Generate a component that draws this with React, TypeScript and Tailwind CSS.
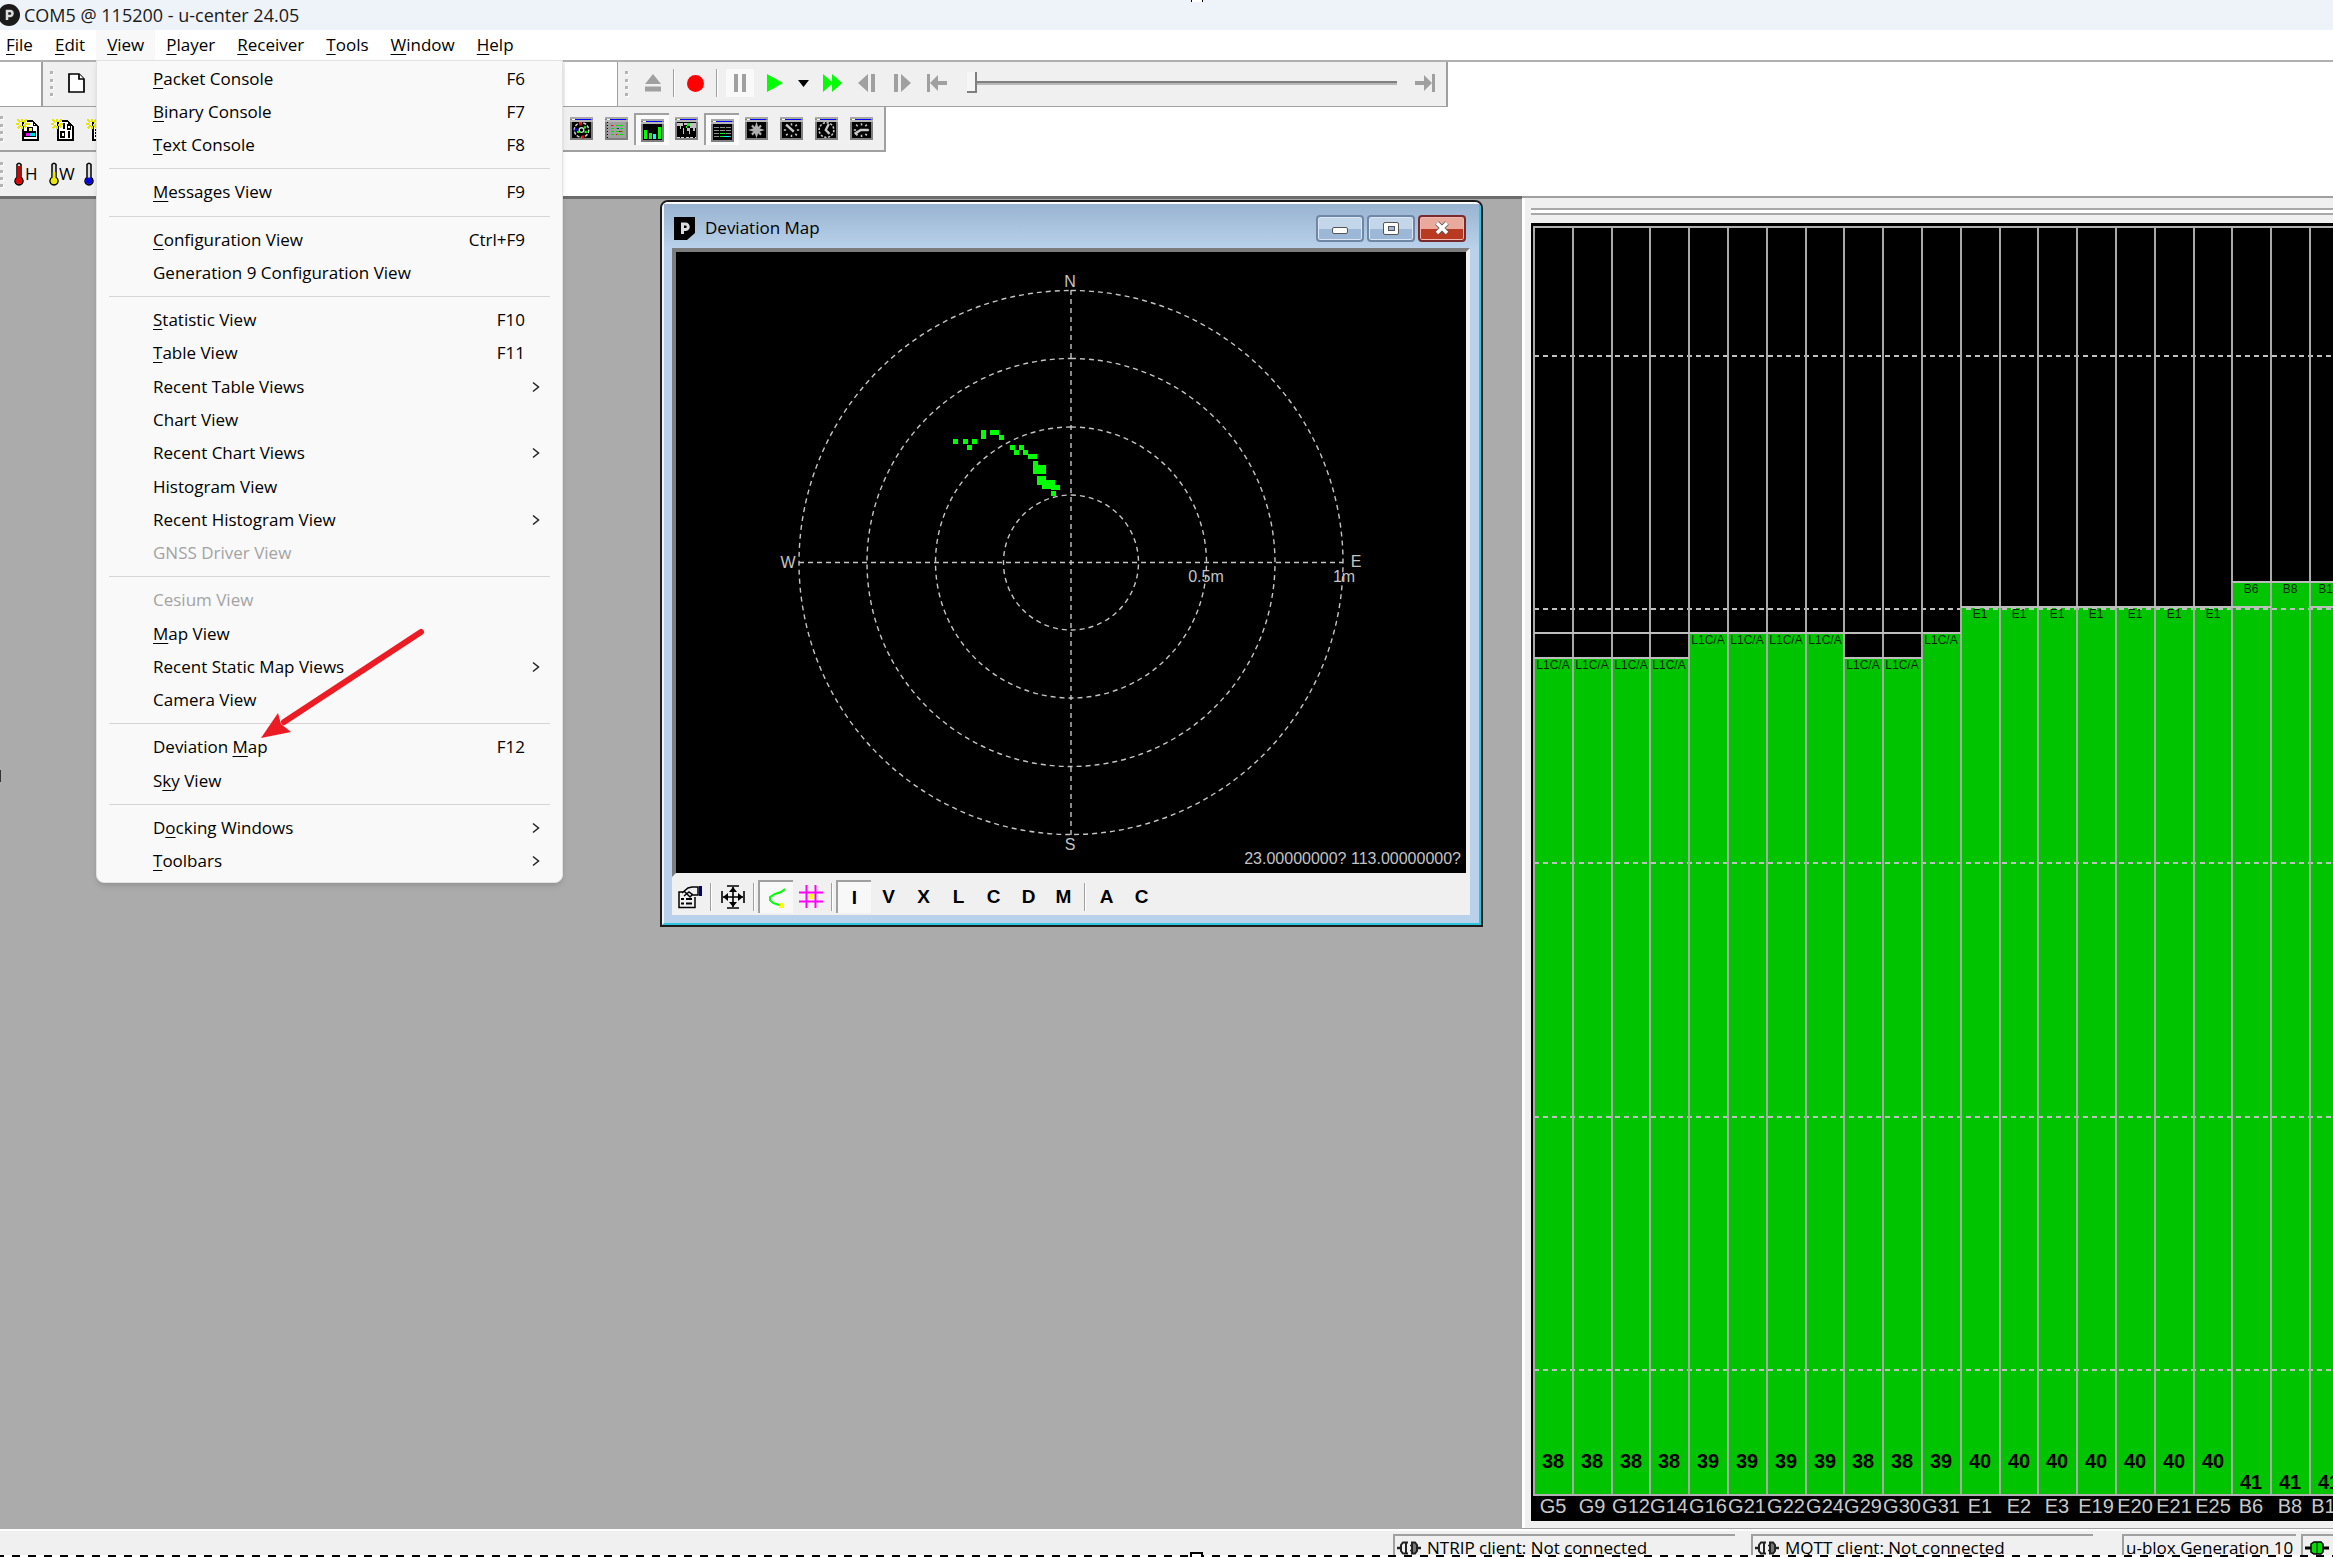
import React from "react";

type Item = {
  pre?: string;
  key?: string;
  post?: string;
  accel?: string;
  sub?: boolean;
  off?: boolean;
};

const menus = ["File", "Edit", "View", "Player", "Receiver", "Tools", "Window", "Help"];

const groups: Item[][] = [
  [
    { key: "P", post: "acket Console", accel: "F6" },
    { key: "B", post: "inary Console", accel: "F7" },
    { key: "T", post: "ext Console", accel: "F8" },
  ],
  [{ key: "M", post: "essages View", accel: "F9" }],
  [
    { key: "C", post: "onfiguration View", accel: "Ctrl+F9" },
    { pre: "Generation 9 Configuration View" },
  ],
  [
    { key: "S", post: "tatistic View", accel: "F10" },
    { key: "T", post: "able View", accel: "F11" },
    { pre: "Recent Table Views", sub: true },
    { pre: "Chart View" },
    { pre: "Recent Chart Views", sub: true },
    { pre: "Histogram View" },
    { pre: "Recent Histogram View", sub: true },
    { pre: "GNSS Driver View", off: true },
  ],
  [
    { pre: "Cesium View", off: true },
    { key: "M", post: "ap View" },
    { pre: "Recent Static Map Views", sub: true },
    { pre: "Camera View" },
  ],
  [
    { pre: "Deviation ", key: "M", post: "ap", accel: "F12" },
    { pre: "S", key: "k", post: "y View" },
  ],
  [
    { pre: "D", key: "o", post: "cking Windows", sub: true },
    { key: "T", post: "oolbars", sub: true },
  ],
];

function Mnemonic({ pre, k, post }: { pre?: string; k?: string; post?: string }) {
  return (
    <span className="whitespace-pre">
      {pre}
      {k && <span className="underline decoration-1 underline-offset-3">{k}</span>}
      {post}
    </span>
  );
}

function ViewMenu() {
  return (
    <div
      role="menu"
      aria-label="View"
      className="absolute left-24 top-[60px] z-20 flex h-[823px] w-[467px] flex-col rounded-b-lg border border-[#e2e2e2] bg-[#f9f9f9] pt-px pb-1 shadow-md"
    >
      {groups.map((group, g) => (
        <React.Fragment key={g}>
          {g > 0 && (
            <div role="separator" className="mx-3 flex h-[14px] items-center">
              <div className="h-px w-full bg-[#d6d6d6]" />
            </div>
          )}
          {group.map((it, i) => (
            <button
              key={i}
              role="menuitem"
              disabled={it.off}
              className="flex min-h-0 flex-1 items-center pr-[19px] pl-14 text-left text-black disabled:text-[#a3a3a3]"
            >
              <Mnemonic pre={it.pre} k={it.key} post={it.post} />
              <span className="ml-auto pr-[18px]">{it.accel}</span>
              {it.sub && (
                <svg className="h-3 w-[14px]" viewBox="0 0 14 12" fill="none" stroke="#222" strokeWidth="1.5">
                  <path d="M4 1.5L9.5 6L4 10.5" />
                </svg>
              )}
            </button>
          ))}
        </React.Fragment>
      ))}
    </div>
  );
}

function Arrow() {
  return (
    <svg className="pointer-events-none absolute left-[256px] top-[620px] z-30 h-[125px] w-[175px]" viewBox="256 620 175 125">
      <path d="M421 632L284 722" stroke="#ed1c24" strokeWidth="6" strokeLinecap="round" />
      <path d="M261 738L278 713L281 724L291 732Z" fill="#ed1c24" />
    </svg>
  );
}

function Grip() {
  return (
    <svg className="h-[27px] w-1 shrink-0" viewBox="0 0 4 27">
      {[1, 9, 16, 23].map((y) => (
        <g key={y}>
          <rect x="1" y={y + 1} width="3" height="3" fill="#fff" />
          <rect x="0" y={y} width="3" height="3" fill="#b4b4b4" />
        </g>
      ))}
    </svg>
  );
}

function Divider() {
  return <div className="h-7 w-[2px] border-l border-[#a0a0a0] bg-white" />;
}

function Mini({ children }: { children: React.ReactNode }) {
  return (
    <svg className="h-[23px] w-[23px]" viewBox="0 0 15 15" shapeRendering="crispEdges">
      <rect width="15" height="15" fill="#808080" />
      <rect x="0" y="0" width="15" height="1" fill="#a8a8a8" />
      <rect x="1" y="1" width="13" height="1" fill="#0000ff" />
      <rect x="1" y="1" width="2" height="1" fill="#fff" />
      <rect x="0" y="2" width="15" height="1" fill="#b8b8b8" />
      <rect x="1" y="3" width="13" height="11" fill="#000" />
      {children}
    </svg>
  );
}

const rays = "M7.5 4V5.5M7.5 11.5V13M2.5 8.5H4M11 8.5H12.5M4 5L5 6M11 5L10 6M4 12L5 11M11 12L10 11";

const views: { name: string; on?: boolean; art: React.ReactNode }[] = [
  {
    name: "Sky view",
    art: (
      <g shapeRendering="auto">
        <circle cx="7.5" cy="8.5" r="4.7" fill="none" stroke="#d0d0d0" strokeWidth="1" strokeDasharray="2 .9" />
        <circle cx="7.5" cy="8.5" r="1.5" fill="none" stroke="#d0d0d0" strokeWidth=".9" />
        <path d="M6 3.5h1.700v2H6zM7.500 12h1.700v2h-1.700z" fill="#f00" />
        <path d="M9 6h1.500v1.500H9zM4.500 9H6v1.500H4.500zM9.500 9H11v1.500H9.500z" fill="#0f0" />
        <path d="M3 7.500h1.700v1.500H3z" fill="#00f" />
      </g>
    ),
  },
  {
    name: "Deviation map",
    art: (
      <g>
        <rect x="1" y="3" width="13" height="11" fill="#a0a0a0" />
        <path d="M1.5 3v11" stroke="#000" strokeWidth="1" strokeDasharray="1 1" />
        <path d="M4 5.5h8M4 7.5h8M4 9.5h8M4 11.5h8" stroke="#00e000" strokeWidth="1" strokeDasharray="2 1" />
        <path d="M4 5h1v1H4zM10 9h1v1h-1zM7 11h1v1H7z" fill="#f00" />
        <path d="M8 7h1v1H8zM9 9h1v1H9z" fill="#00f" />
      </g>
    ),
  },
  {
    name: "Satellite level",
    on: true,
    art: (
      <g>
        <path d="M2 7h2v6H2zM5 9h2v4H5zM11 5h2v8h-2z" fill="#0f0" />
        <path d="M8 10h2v3H8z" fill="#00ffff" />
      </g>
    ),
  },
  {
    name: "World position",
    art: (
      <g>
        <path d="M1 4h4v2H4v2H3V6H1zM5 7h1v4H5zM6 4h2v1H6zM10 4h4v3h-1v2h-1V7h-2zM8 7h2v4H9V9H8z" fill="#c0c0c0" />
        <path d="M8 4h2v2H8zM7 6h1v1H7z" fill="#0f0" />
        <path d="M1 13.5h13" stroke="#d8d8d8" strokeWidth="1" strokeDasharray="2 1" />
      </g>
    ),
  },
  {
    name: "Data view",
    on: true,
    art: (
      <g>
        <path d="M2 5.5h11M2 7.5h11M2 9.5h11M2 11.5h11" stroke="#909090" strokeWidth="1" />
        <path d="M5.5 4v9M9.5 4v9" stroke="#000" strokeWidth=".6" />
        <path d="M6 9h3v1H6zM6 11h2v1H6z" fill="#0f0" />
        <path d="M8 11h4v1H8z" fill="#00ffff" />
      </g>
    ),
  },
  {
    name: "Compass",
    art: (
      <g shapeRendering="auto">
        <path d="M7.5 3L8.8 7.2L13 8.5L8.8 9.8L7.5 14L6.2 9.8L2 8.5L6.2 7.2Z" fill="#b0b0b0" />
        <path d="M4.500 5.500L10.500 11.500M10.500 5.500L4.500 11.500" stroke="#b0b0b0" strokeWidth="1.400" />
      </g>
    ),
  },
  {
    name: "Speedometer",
    art: (
      <g shapeRendering="auto" stroke="#c8c8c8" fill="none">
        <path d={rays} strokeWidth="1" />
        <path d="M4 5L9 9.5" strokeWidth="1.6" />
      </g>
    ),
  },
  {
    name: "Clock",
    art: (
      <g shapeRendering="auto" stroke="#c8c8c8" fill="none">
        <circle cx="7.5" cy="8.5" r="4.8" strokeWidth="1" strokeDasharray="1.5 1" />
        <path d="M9 4.5L7 8.5L9.5 11" strokeWidth="1.5" />
      </g>
    ),
  },
  {
    name: "Altimeter",
    art: (
      <g shapeRendering="auto" stroke="#c8c8c8" fill="none">
        <path d={rays} strokeWidth="1" />
        <path d="M3 11L7 8.5H12" strokeWidth="1.6" />
      </g>
    ),
  },
];

function NewPage({ children }: { children: React.ReactNode }) {
  return (
    <svg className="h-6 w-6" viewBox="0 0 16 16" shapeRendering="crispEdges">
      <path d="M4.5 3V15.5H14.5V6L11 2.5H7" fill="#fff" stroke="#000" strokeWidth="1.1" />
      <path d="M11.5 2.5V5.5H14.5" fill="none" stroke="#000" strokeWidth="1" />
      <path d="M4 1v2M0 4.5h2M6 4.5h3M4 6v2M1 1.5l2 2M7 1.5l-2 2M1 7.5l2-2M5 5l2 2" stroke="#e6e600" strokeWidth="1.2" />
      {children}
    </svg>
  );
}

function Thermo({ fill, level }: { fill: string; level: number }) {
  return (
    <svg className="h-[24px] w-[10px]" viewBox="0 0 10 24">
      <path d="M3 2.5Q5 0 7 2.5V15.5A4 4 0 1 1 3 15.5Z" fill="#ddd" stroke="#000" strokeWidth="1.5" />
      <rect x="3.8" y={level} width="2.6" height={19 - level} fill={fill} />
      <circle cx="5" cy="18.8" r="3.3" fill={fill} />
    </svg>
  );
}

const slot = "flex h-8 w-[35px] shrink-0 items-center justify-center";

function PlayerBar() {
  const g = "#a0a0a0";
  return (
    <div className="flex items-center border-r-2 border-[#a0a0a0] bg-[#f0f0f0] pr-1 pb-[2px]">
      <div className="flex w-[18px] justify-center">
        <Grip />
      </div>
      <button aria-label="Eject" className="flex w-[33px] justify-center">
        <svg className="h-[18px] w-[18px]" viewBox="0 0 18 18" fill={g}>
          <path d="M9 0L17 10H1ZM1 12.500h16v5H1z" />
        </svg>
      </button>
      <div className="flex w-[9px] justify-center">
        <Divider />
      </div>
      <button aria-label="Record" className={slot}>
        <span className="size-[17px] rounded-full bg-[#ff0000]" />
      </button>
      <div className="flex w-2 justify-center">
        <Divider />
      </div>
      <button aria-label="Pause" className="flex w-[37px] justify-center">
        <span className="flex h-7 w-7 items-center justify-center gap-1 bg-[#f9f9f9]">
          <span className="h-[18px] w-1 bg-[#a0a0a0]" />
          <span className="h-[18px] w-1 bg-[#a0a0a0]" />
        </span>
      </button>
      <button aria-label="Play" className="flex w-[33px] justify-center">
        <svg className="h-[18px] w-4" viewBox="0 0 16 18" fill="#00ff00">
          <path d="M0 0L16 9L0 18Z" />
        </svg>
      </button>
      <button aria-label="Play options" className="flex w-[25px] justify-center">
        <svg className="h-[7px] w-[11px]" viewBox="0 0 11 7">
          <path d="M0 0H11L5.5 7Z" />
        </svg>
      </button>
      <button aria-label="Fast forward" className="flex w-[33px] justify-center">
        <svg className="h-[18px] w-[19px]" viewBox="0 0 19 18" fill="#00ff00">
          <path d="M0 0L10 9L0 18ZM9 0L19 9L9 18Z" />
        </svg>
      </button>
      <button aria-label="Step back" className={slot}>
        <svg className="h-[18px] w-[18px]" viewBox="0 0 18 18" fill={g}>
          <path d="M10 0V18L0 9ZM13 0h4v18h-4z" />
        </svg>
      </button>
      <button aria-label="Step forward" className={slot}>
        <svg className="h-[18px] w-[18px]" viewBox="0 0 18 18" fill={g}>
          <path d="M8 0V18L18 9ZM1 0h4v18H1z" />
        </svg>
      </button>
      <button aria-label="Go to start" className={slot}>
        <svg className="h-[18px] w-5" viewBox="0 0 20 18" fill={g}>
          <path d="M0 0h3v18H0zM3 9L11 1V7H20V11H11V17Z" />
        </svg>
      </button>
      <input
        type="range"
        aria-label="Position"
        defaultValue={0}
        className="ml-[13px] h-6 w-[430px] appearance-none bg-transparent [&::-webkit-slider-runnable-track]:h-[4px] [&::-webkit-slider-runnable-track]:border-t-2 [&::-webkit-slider-runnable-track]:border-[#808080] [&::-webkit-slider-runnable-track]:bg-[#b8b8b8] [&::-webkit-slider-thumb]:-mt-[11px] [&::-webkit-slider-thumb]:h-[21px] [&::-webkit-slider-thumb]:w-[10px] [&::-webkit-slider-thumb]:appearance-none [&::-webkit-slider-thumb]:border-r-2 [&::-webkit-slider-thumb]:border-b-2 [&::-webkit-slider-thumb]:border-[#808080] [&::-webkit-slider-thumb]:bg-[#f6f6f6]"
      />
      <button aria-label="Go to end" className="ml-[10px] flex h-8 w-[35px] items-center justify-center">
        <svg className="h-[18px] w-5" viewBox="0 0 20 18" fill={g}>
          <path d="M17 0h3v18H17zM17 9L9 1V7H0V11H9V17Z" />
        </svg>
      </button>
    </div>
  );
}

function Toolbars() {
  return (
    <div className="flex flex-col bg-white">
      <div className="flex h-[47px] items-stretch border-t-2 border-[#b0b0b0]">
        <div className="w-[41px] border-b border-[#a0a0a0]" />
        <div className="flex w-[524px] items-center border-b border-l-2 border-[#a0a0a0] bg-[#f0f0f0] pb-[2px] pl-[7px]">
          <Grip />
          <button aria-label="New" className="ml-[14px]">
            <svg className="h-5 w-[17px]" viewBox="0 0 17 20" fill="#fff" stroke="#000" strokeWidth="1.7">
              <path d="M1 1H11L16 6V19H1Z" />
              <path d="M11 1V6H16" />
            </svg>
          </button>
        </div>
        <div className="flex border-b border-[#a0a0a0] pl-[52px]">
          <div className="flex border-l border-[#a0a0a0]">
            <PlayerBar />
          </div>
        </div>
      </div>
      <div className="flex h-[45px] w-[886px] items-center border-r-2 border-b-2 border-[#a0a0a0] bg-[#f0f0f0] pr-[5px]">
        <div className="flex w-[10px]">
          <Grip />
        </div>
        <button aria-label="New packet console" className={slot}>
          <NewPage>
            <path d="M8 7h3v3H8z" fill="#ffff00" stroke="#000" strokeWidth=".8" />
            <path d="M6 10h4v3H6z" fill="#ff00ff" />
            <path d="M9 10h4v3H9z" fill="#00dddd" />
            <path d="M6 10h7v3H6z" fill="none" stroke="#000" strokeWidth=".8" />
          </NewPage>
        </button>
        <button aria-label="New binary console" className={slot}>
          <NewPage>
            <path d="M8.500 4V8M11 5h2v3h-2zM6.500 10h2.500v3.500H6.500zM12 9.500V14" fill="none" stroke="#000" strokeWidth="1.2" />
          </NewPage>
        </button>
        <button aria-label="New text console" className={slot}>
          <NewPage>
            <path d="M6 8.500h7M6 10.500h7M6 12.500h7" stroke="#000" strokeWidth="1" />
          </NewPage>
        </button>
        <div className="ml-auto flex items-center">
          {views.map((v) => (
            <button
              key={v.name}
              aria-label={v.name}
              className={
                v.on
                  ? "flex h-8 w-[35px] items-center justify-center border-t-2 border-l-2 border-[#a0a0a0] bg-[#fafafa] pt-[2px]"
                  : "flex h-8 w-[35px] items-center justify-center"
              }
            >
              <Mini>{v.art}</Mini>
            </button>
          ))}
        </div>
      </div>
      <div className="flex h-[44px]">
        <div className="flex w-[400px] items-center bg-[#f0f0f0]">
          <div className="flex w-[14px]">
            <Grip />
          </div>
          <button aria-label="Hotstart" className="flex w-[35px] items-center gap-px text-[17px] leading-5">
            <Thermo fill="#e00000" level={4} />H
          </button>
          <button aria-label="Warmstart" className="flex w-[35px] items-center text-[17px] leading-5">
            <Thermo fill="#e8e800" level={10} />W
          </button>
          <button aria-label="Coldstart" className="flex w-[35px] items-center">
            <Thermo fill="#0000e0" level={16} />
          </button>
        </div>
      </div>
    </div>
  );
}

const trail: [number, number, number, number][] = [
  [953, 439, 5, 5], [963, 439, 5, 5], [972, 439, 5, 5], [967, 445, 5, 5], [981, 430, 5, 9],
  [990, 430, 9, 5], [999, 435, 5, 5], [1010, 445, 5, 5], [1019, 445, 5, 5], [1014, 450, 5, 5],
  [1023, 450, 5, 5], [1028, 454, 9, 5], [1033, 461, 5, 5], [1033, 465, 13, 9], [1037, 476, 9, 9],
  [1042, 480, 13, 9], [1051, 485, 9, 5], [1051, 491, 5, 5],
];

function Plot() {
  return (
    <svg className="block h-[621px] w-full" viewBox="676 252 790 621" preserveAspectRatio="xMidYMid slice">
      <rect x="676" y="252" width="790" height="621" fill="#000" />
      <g fill="none" stroke="#c4c4c4" strokeWidth="1.400" strokeDasharray="5 4">
        {[67.5, 135.5, 204, 272].map((r) => (
          <circle key={r} cx="1071" cy="562.500" r={r} transform="rotate(-90 1071 562.5)" />
        ))}
        <path d="M1071 290V835M799 562.500H1343" />
      </g>
      <g fill="#00ff00" shapeRendering="crispEdges">
        {trail.map(([x, y, w, h], i) => (
          <rect key={i} x={x} y={y} width={w} height={h} />
        ))}
      </g>
      <g fill="#c4c4c4" fontFamily="Liberation Sans, Arial, sans-serif" fontSize="16" textAnchor="middle">
        <text x="1070" y="287">N</text>
        <text x="1070" y="850">S</text>
        <text x="788" y="568">W</text>
        <text x="1356" y="567">E</text>
        <text x="1206" y="582">0.5m</text>
        <text x="1344" y="582">1m</text>
        <text x="1461" y="864" textAnchor="end">23.00000000? 113.00000000?</text>
      </g>
    </svg>
  );
}

function WinButton({ name, close, children }: { name: string; close?: boolean; children: React.ReactNode }) {
  return (
    <button
      aria-label={name}
      className={
        close
          ? "flex h-[27px] w-12 items-center justify-center rounded-sm border-2 border-[#7a2a2c] bg-linear-to-b from-[#e9a99c] from-50% to-[#b83a20] to-50% inset-ring inset-ring-[#f0b8ae]"
          : "flex h-[27px] w-12 items-center justify-center rounded-sm border-2 border-[#6f87a4] bg-linear-to-b from-[#c3d6ea] from-50% to-[#9db8d6] to-50% inset-ring inset-ring-[#dbe7f4]"
      }
    >
      {children}
    </button>
  );
}

const tool = "flex h-[32px] w-[35px] items-center justify-center";
const toolOn = "flex h-[33px] w-[35px] items-center justify-center border-t-2 border-l-2 border-[#a0a0a0] bg-[#f8f8f8]";

function ToolGap() {
  return (
    <div className="flex w-2 justify-center">
      <Divider />
    </div>
  );
}

function DeviationWindow() {
  return (
    <section
      aria-label="Deviation Map"
      className="absolute left-[660px] top-px flex w-[823px] flex-col overflow-hidden rounded-t-lg border-2 border-[#1c1c1c] bg-[#b9d1ea]"
    >
      <div className="flex flex-col border-2 border-t-white border-r-[#2ec6dc] border-b-[#2ec6dc] border-l-[#eef5fc]">
        <header className="flex h-[44px] items-center bg-linear-to-b from-[#99b4d1] to-[#b9d1ea] pt-1 pr-[13px] pl-[10px]">
          <svg className="h-[23px] w-[21px]" viewBox="0 0 21 23">
            <path d="M0 0H21V16L13 23H0Z" />
            <path d="M8.500 17V7h3a2.500 2.500 0 0 1 0 5.500H8.500" fill="none" stroke="#ddd" strokeWidth="3" />
          </svg>
          <h2 className="ml-[10px] text-[17px] leading-6">Deviation Map</h2>
          <div className="ml-auto flex gap-[3px]">
            <WinButton name="Minimize">
              <span className="mt-1 h-[7px] w-4 rounded-xs border border-[#555] bg-white" />
            </WinButton>
            <WinButton name="Maximize">
              <span className="flex h-[13px] w-4 items-center justify-center rounded-xs border border-[#555] bg-white">
                <span className="h-[5px] w-[7px] border border-[#555] bg-[#9db8d6]" />
              </span>
            </WinButton>
            <WinButton name="Close" close>
              <svg className="h-3.5 w-4" viewBox="0 0 16 14">
                <path d="M3 2L13 12M13 2L3 12" stroke="#555" strokeWidth="5" />
                <path d="M3 2L13 12M13 2L3 12" stroke="#fff" strokeWidth="3.400" />
              </svg>
            </WinButton>
          </div>
        </header>
        <div className="mr-[9px] mb-2 ml-2 flex flex-col bg-[#f0f0f0]">
          <div className="border-4 border-t-[#7c7c7c] border-r-[#f0f0f0] border-b-[#f0f0f0] border-l-[#7c7c7c]">
            <Plot />
          </div>
          <div className="flex h-[38px] items-center pt-px font-['Liberation_Sans',Arial,sans-serif] text-[19px] leading-6 font-bold text-black">
            <button aria-label="Properties" className={tool}>
              <svg className="h-6 w-6" viewBox="0 0 24 24" fill="none" stroke="#000" strokeWidth="1.500">
                <path d="M17 12V22.500H1V7H5" />
                <path d="M3 14h3M3 18.500h3M8 14h6M8 18.500h6" strokeWidth="2" />
                <path d="M4 8L10 3L14 2H20V10H15L11 7L6 11M6 6L12 12L15 9" />
                <path d="M21 1h3v10h-3z" fill="#000080" stroke="none" />
              </svg>
            </button>
            <ToolGap />
            <button aria-label="Fit" className={tool}>
              <svg className="h-6 w-6" viewBox="0 0 24 24" fill="none" stroke="#000" strokeWidth="1.600">
                <path d="M12 2V22M2 12H22M1 6V18M23 6V18M6 1H18M6 23H18" />
                <path d="M12 2L8 7h8ZM12 22L8 17h8ZM2 12L7 8v8ZM22 12L17 8v8Z" fill="#000" stroke="none" />
              </svg>
            </button>
            <ToolGap />
            <button aria-label="Trail" className={toolOn}>
              <svg className="h-5 w-5" viewBox="0 0 20 20" fill="none">
                <path d="M18 1L14 4L8 6L3 9V12L6 15L12 17" stroke="#00ff00" strokeWidth="2" />
                <rect x="12" y="15" width="5" height="5" fill="#ffff00" />
              </svg>
            </button>
            <button aria-label="Grid" className={tool}>
              <svg className="h-6 w-6" viewBox="0 0 24 24">
                <path d="M7.500 0V23M16.500 0V23M0 7.500H24M0 16.500H24" stroke="#ff00ff" strokeWidth="2" />
                <rect x="10" y="9" width="4" height="5" fill="#ffff00" />
              </svg>
            </button>
            <ToolGap />
            <button className={toolOn}>I</button>
            {["V", "X", "L", "C", "D", "M"].map((c) => (
              <button key={c} className={tool}>
                {c}
              </button>
            ))}
            <ToolGap />
            <button className={tool}>A</button>
            <button className={tool}>C</button>
          </div>
        </div>
      </div>
    </section>
  );
}

type Bar = { id: string; v: number; band: string; hold?: number };
const bars: Bar[] = [
  ...["G5", "G9", "G12", "G14"].map((id) => ({ id, v: 38, band: "L1C/A", hold: 39 })),
  ...["G16", "G21", "G22", "G24"].map((id) => ({ id, v: 39, band: "L1C/A" })),
  ...["G29", "G30"].map((id) => ({ id, v: 38, band: "L1C/A", hold: 39 })),
  { id: "G31", v: 39, band: "L1C/A" },
  ...["E1", "E2", "E3", "E19", "E20", "E21", "E25"].map((id) => ({ id, v: 40, band: "E1" })),
  { id: "B6", v: 41, band: "B6", hold: 40 },
  { id: "B8", v: 41, band: "B8" },
  { id: "B13", v: 41, band: "B13", hold: 40 },
];

const colX = (i: number) => Math.round(1534 + i * 38.8);
const levelY = (v: number) => Math.round(1496 - (v - 5) * 25.36);

function LevelChart() {
  return (
    <svg className="block h-[1298px] w-[802px]" viewBox="1531 224 802 1298">
      <rect x="1531" y="224" width="802" height="1298" fill="#000" />
      <g shapeRendering="crispEdges">
        {bars.map((b, i) => (
          <rect key={b.id} x={colX(i)} y={levelY(b.v)} width="39" height={1496 - levelY(b.v)} fill="#00c400" />
        ))}
        <path
          d={[50, 40, 30, 20, 10].map((v) => `M1534 ${levelY(v) + 2}H2333`).join("")}
          stroke="#c0c0c0"
          strokeWidth="2"
          strokeDasharray="5 4"
        />
        <path d={bars.map((_, i) => `M${colX(i)} 228V1496`).join("")} stroke="#a9a9a9" strokeWidth="2" />
        {bars.map((b, i) => (
          <path
            key={b.id}
            d={`M${colX(i)} ${levelY(b.v)}h39${b.hold ? `M${colX(i)} ${levelY(b.hold)}h39` : ""}`}
            stroke="#bdbdbd"
            strokeWidth="2"
          />
        ))}
        <path d="M1533 228H2333M1533 1496H2333" stroke="#b0b0b0" strokeWidth="2" />
      </g>
      <g fontFamily="Liberation Sans, Arial, sans-serif" textAnchor="middle">
        {bars.map((b, i) => (
          <g key={b.id}>
            <text x={colX(i) + 19} y={levelY(b.v) + 11} fontSize="12" fill="#022802">
              {b.band}
            </text>
            <text x={colX(i) + 19} y={b.v === 41 ? 1490 : 1469} fontSize="20" fontWeight="bold">
              {b.v}
            </text>
            <text x={colX(i) + 19} y="1514" fontSize="20" fill="#c8c8c8">
              {b.id}
            </text>
          </g>
        ))}
      </g>
    </svg>
  );
}

function Plug({ linked }: { linked?: boolean }) {
  return (
    <svg className="h-[14px] w-6 shrink-0" viewBox="0 0 24 14">
      {linked ? (
        <>
          <path d="M0 7H24" stroke="#000" strokeWidth="3" />
          <path d="M6 3L9 1H16L18 3V11L16 13H9L6 11Z" fill="#00e000" stroke="#000" strokeWidth="1.500" />
          <path d="M12 1V13" stroke="#000" strokeWidth="1" />
        </>
      ) : (
        <>
          <path d="M0 7H4M20 7H24" stroke="#222" strokeWidth="2.500" />
          <path d="M11 1.500H6L4 4V10L6 12.500H11M9 2V12" fill="none" stroke="#222" strokeWidth="2" />
          <path d="M15 1.500H18L20 4V10L18 12.500H15Z" fill="#777" stroke="#222" strokeWidth="2" />
          <path d="M13 4.500h3M13 9.500h3" stroke="#222" strokeWidth="1.500" />
        </>
      )}
    </svg>
  );
}

const field = "flex h-[26px] items-center gap-[6px] border-t-2 border-l-2 border-[#a0a0a0] pl-[2px] whitespace-nowrap";

export default function App() {
  return (
    <div className="relative flex h-screen flex-col overflow-hidden bg-[#f0f0f0] font-['Open_Sans','Noto_Sans',sans-serif] text-[17px] leading-6 text-black">
      <header className="flex h-[30px] shrink-0 items-center bg-[#eef2f9] pb-px">
        <svg className="h-6 w-5" viewBox="0 0 20 24">
          <circle cx="9" cy="12" r="11" fill="#1b1b1b" />
          <path d="M7 17V8h3a2.500 2.500 0 0 1 0 5H7" fill="none" stroke="#ddd" strokeWidth="2.500" />
        </svg>
        <h1 className="ml-1 text-[18px] text-[#1a1a1a]">COM5 @ 115200 - u-center 24.05</h1>
      </header>
      <nav className="flex h-[30px] shrink-0 bg-white" aria-label="Main menu">
        {menus.map((m) => (
          <button
            key={m}
            className={
              m === "View"
                ? "bg-[#f8f8f8] px-[11px]"
                : m === "File"
                  ? "pr-[11px] pl-[6px]"
                  : "px-[11px]"
            }
          >
            <Mnemonic k={m[0]} post={m.slice(1)} />
          </button>
        ))}
      </nav>
      <Toolbars />
      <main className="flex min-h-0 flex-1">
        <div className="relative min-w-0 flex-1 border-t-3 border-[#6c6c6c] bg-[#ababab]">
          <DeviationWindow />
        </div>
        <aside className="flex w-[811px] shrink-0 flex-col border-t-2 border-b border-t-[#a0a0a0] border-b-[#a0a0a0]">
          <div className="flex min-h-0 flex-1 flex-col border-l-3 border-white pl-[6px]">
            <div className="mt-[10px] mb-[8px] h-[7px] border-t-2 border-b-2 border-[#a8a8a8] bg-white" />
            <LevelChart />
          </div>
        </aside>
      </main>
      <footer className="flex h-[28px] shrink-0 overflow-hidden border-t-2 border-white pt-[3px] pl-[1393px]">
        <div className={`${field} w-[342px]`}>
          <Plug />
          NTRIP client: Not connected
        </div>
        <div className={`${field} ml-4 w-[342px]`}>
          <Plug />
          MQTT client: Not connected
        </div>
        <div className={`${field} ml-[29px] w-[174px]`}>u-blox Generation 10</div>
        <div className={`${field} ml-[5px] flex-1 border-r-0`}>
          <Plug linked />
        </div>
      </footer>

      <ViewMenu />
      <Arrow />
      <svg className="pointer-events-none absolute bottom-0 left-0 z-30 h-[5px] w-full" shapeRendering="crispEdges">
        <path d="M-4 4H2400" stroke="#fff" strokeWidth="2" />
        <path d="M-4 4H2400" stroke="#000" strokeWidth="2" strokeDasharray="8 8" />
        <path d="M1191 5V1H1202V5" fill="#fff" stroke="#000" strokeWidth="2" />
      </svg>
      <div className="absolute top-0 left-[1191px] h-[2px] w-3 border-x border-black bg-white" />
      <div className="absolute top-[770px] left-0 h-3 w-px bg-[#333]" />
    </div>
  );
}
